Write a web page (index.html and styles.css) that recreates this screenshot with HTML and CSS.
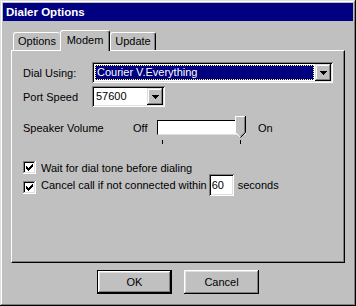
FILE: index.html
```html
<!DOCTYPE html>
<html lang="en">
<head>
  <meta charset="UTF-8" />
  <title>Dialer Options</title>
  <link rel="stylesheet" href="styles.css">
</head>
<body>

  <div class="window">
    <div class="titlebar">Dialer Options</div>

    <div class="tabs">
      <div class="tab tab-first">Options</div>
      <div class="tab tab-active">Modem</div>
      <div class="tab tab-last">Update</div>
    </div>

    <div class="panel">
      <div class="row">
        <span class="label">Dial Using:</span>
        <div class="combo combo-wide">
          <div class="combo-field focused">Courier V.Everything</div>
          <div class="combo-btn">
            <svg width="7" height="4" viewBox="0 0 7 4" shape-rendering="crispEdges"><path d="M0 0h7v1H0zM1 1h5v1H1zM2 2h3v1H2zM3 3h1v1H3z" fill="#000"/></svg>
          </div>
        </div>
      </div>

      <div class="row row-gap">
        <span class="label">Port Speed</span>
        <div class="combo combo-small">
          <div class="combo-field">57600</div>
          <div class="combo-btn">
            <svg width="7" height="4" viewBox="0 0 7 4" shape-rendering="crispEdges"><path d="M0 0h7v1H0zM1 1h5v1H1zM2 2h3v1H2zM3 3h1v1H3z" fill="#000"/></svg>
          </div>
        </div>
      </div>

      <div class="speaker">
        <span class="speaker-label">Speaker Volume</span>
        <span class="off">Off</span>
        <div class="slider">
          <div class="track"></div>
          <svg class="thumb" width="11" height="22" viewBox="0 0 11 22">
            <polygon points="0,0 11,0 11,16 5.5,21.5 0,16" fill="#c0c0c0"/>
            <path d="M0.5 16V0.5H9.5" stroke="#fff" fill="none"/>
            <path d="M0.5 16.5L5 21" stroke="#fff" fill="none"/>
            <path d="M10.5 0V16.5L5.5 21.5" stroke="#000" fill="none"/>
            <path d="M9.5 1V16.2L5.5 20.2" stroke="#808080" fill="none"/>
          </svg>
          <span class="tick tick-min"></span>
          <span class="tick tick-max"></span>
        </div>
        <span class="on">On</span>
      </div>

      <div class="check-row first-check">
        <svg class="checkbox" width="13" height="13" viewBox="0 0 13 13" shape-rendering="crispEdges">
          <rect x="2" y="2" width="9" height="9" fill="#fff"/>
          <path d="M0.5 12V0.5H12" stroke="#808080" fill="none"/>
          <path d="M1.5 11V1.5H11" stroke="#000" fill="none"/>
          <path d="M0 12.5H12.5V0" stroke="#fff" fill="none"/>
          <path d="M1 11.5H11.5V1" stroke="#dfdfdf" fill="none"/>
          <path d="M3 5h1v3H3zM4 6h1v3H4zM5 7h1v3H5zM6 6h1v3H6zM7 5h1v3H7zM8 4h1v3H8zM9 3h1v3H9z" fill="#000"/>
        </svg>
        <span class="check-text">Wait for dial tone before dialing</span>
      </div>

      <div class="check-row second-check">
        <svg class="checkbox" width="13" height="13" viewBox="0 0 13 13" shape-rendering="crispEdges">
          <rect x="2" y="2" width="9" height="9" fill="#fff"/>
          <path d="M0.5 12V0.5H12" stroke="#808080" fill="none"/>
          <path d="M1.5 11V1.5H11" stroke="#000" fill="none"/>
          <path d="M0 12.5H12.5V0" stroke="#fff" fill="none"/>
          <path d="M1 11.5H11.5V1" stroke="#dfdfdf" fill="none"/>
          <path d="M3 5h1v3H3zM4 6h1v3H4zM5 7h1v3H5zM6 6h1v3H6zM7 5h1v3H7zM8 4h1v3H8zM9 3h1v3H9z" fill="#000"/>
        </svg>
        <span class="check-text">Cancel call if not connected within</span>
        <div class="num">60</div>
        <span class="secs">seconds</span>
      </div>
    </div>

    <div class="buttons">
      <div class="btn btn-default">OK</div>
      <div class="btn">Cancel</div>
    </div>
  </div>

</body>
</html>
```

FILE: styles.css
```css
body {
  margin: 0;
  background: #c0c0c0;
  color: #000;
  font-family: "Liberation Sans", Arial, sans-serif;
  font-size: 11px;
}
.window {
  width: 356px;
  height: 306px;
  box-sizing: border-box;
  padding: 3px;
  background: #c0c0c0;
  box-shadow: inset -1px -1px #000, inset 1px 1px #dfdfdf, inset -2px -2px #808080, inset 2px 2px #fff;
}
.titlebar {
  height: 18px;
  line-height: 18px;
  padding-left: 3px;
  background: #000080;
  color: #fff;
  font-weight: bold;
  font-size: 11.5px;
}

/* tabs */
.tabs {
  display: flex;
  align-items: flex-end;
  height: 20px;
  margin: 9px 8px 0;
  padding-left: 2px;
  position: relative;
  z-index: 1;
}
.tab {
  height: 18px;
  box-sizing: border-box;
  border: 1px solid;
  border-color: #fff #000 transparent #fff;
  border-bottom: 0;
  border-radius: 3px 3px 0 0;
  box-shadow: inset -1px 0 #808080;
  text-align: center;
  line-height: 17px;
}
.tab-first {
  width: 47px;
  border-right: 0;
  box-shadow: none;
}
.tab-active {
  width: 50px;
  height: 21px;
  margin-bottom: -1px;
  line-height: 18px;
  background: #c0c0c0;
}
.tab-last {
  width: 46px;
}

/* panel */
.panel {
  height: 213px;
  box-sizing: border-box;
  margin: 0 8px;
  padding: 11px 11px 0;
  border: 1px solid;
  border-color: #fff #000 #000 #fff;
  box-shadow: inset -1px -1px #808080;
}
.row {
  display: flex;
  align-items: center;
}
.row-gap {
  margin-top: 3px;
}
.label {
  width: 69px;
}
.combo {
  display: flex;
  height: 21px;
  box-sizing: border-box;
  padding: 2px;
  background: #fff;
  box-shadow: inset 1px 1px #808080, inset -1px -1px #fff, inset 2px 2px #000, inset -2px -2px #dfdfdf;
}
.combo-wide {
  width: 241px;
}
.combo-small {
  width: 73px;
}
.combo-field {
  flex: 1;
  padding-left: 2px;
  line-height: 17px;
}
.focused {
  margin: 1px;
  padding-left: 1px;
  border: 1px dotted #ffff80;
  line-height: 13px;
  background: #000080;
  color: #fff;
}
.combo-btn {
  width: 16px;
  height: 17px;
  box-sizing: border-box;
  display: flex;
  align-items: center;
  justify-content: center;
  background: #c0c0c0;
  box-shadow: inset -1px -1px #000, inset 1px 1px #dfdfdf, inset -2px -2px #808080, inset 2px 2px #fff;
}

/* volume slider */
.speaker {
  display: flex;
  align-items: flex-start;
  height: 29px;
  margin-top: 9px;
}
.speaker-label,
.off,
.on {
  padding-top: 5px;
  line-height: 14px;
}
.speaker-label {
  width: 110px;
}
.off {
  width: 24px;
}
.on {
  margin-left: 11px;
}
.slider {
  position: relative;
  width: 90px;
  height: 29px;
}
.track {
  width: 89px;
  height: 15px;
  margin-top: 4px;
  box-sizing: border-box;
  background: #fff;
  border: 1px solid;
  border-color: #000 #dfdfdf #dfdfdf #000;
}
.thumb {
  position: absolute;
  left: 78px;
  top: 0;
}
.tick {
  position: absolute;
  top: 24px;
  width: 1px;
  height: 4px;
  background: #000;
}
.tick-min { left: 5px; }
.tick-max { left: 83px; }

/* checkboxes */
.check-row {
  display: flex;
  align-items: center;
}
.first-check {
  height: 13px;
  margin-top: 16px;
}
.second-check {
  height: 22px;
  align-items: flex-start;
}
.second-check .checkbox {
  margin-top: 7px;
}
.second-check .check-text,
.second-check .secs {
  line-height: 22px;
}
.checkbox {
  display: block;
  flex-shrink: 0;
}
.check-text {
  margin-left: 5px;
}
.num {
  width: 25px;
  height: 22px;
  box-sizing: border-box;
  margin-left: 2px;
  padding-left: 3px;
  line-height: 22px;
  background: #fff;
  box-shadow: inset 1px 1px #808080, inset -1px -1px #fff, inset 2px 2px #000, inset -2px -2px #dfdfdf;
}
.secs {
  margin-left: 4px;
}

/* buttons */
.buttons {
  display: flex;
  justify-content: center;
  gap: 12px;
  margin-top: 7px;
}
.btn {
  width: 75px;
  height: 24px;
  box-sizing: border-box;
  line-height: 24px;
  text-align: center;
  background: #c0c0c0;
  box-shadow: inset -1px -1px #000, inset 1px 1px #fff, inset -2px -2px #808080, inset 2px 2px #dfdfdf;
}
.btn-default {
  border: 1px solid #000;
  line-height: 22px;
}
```
